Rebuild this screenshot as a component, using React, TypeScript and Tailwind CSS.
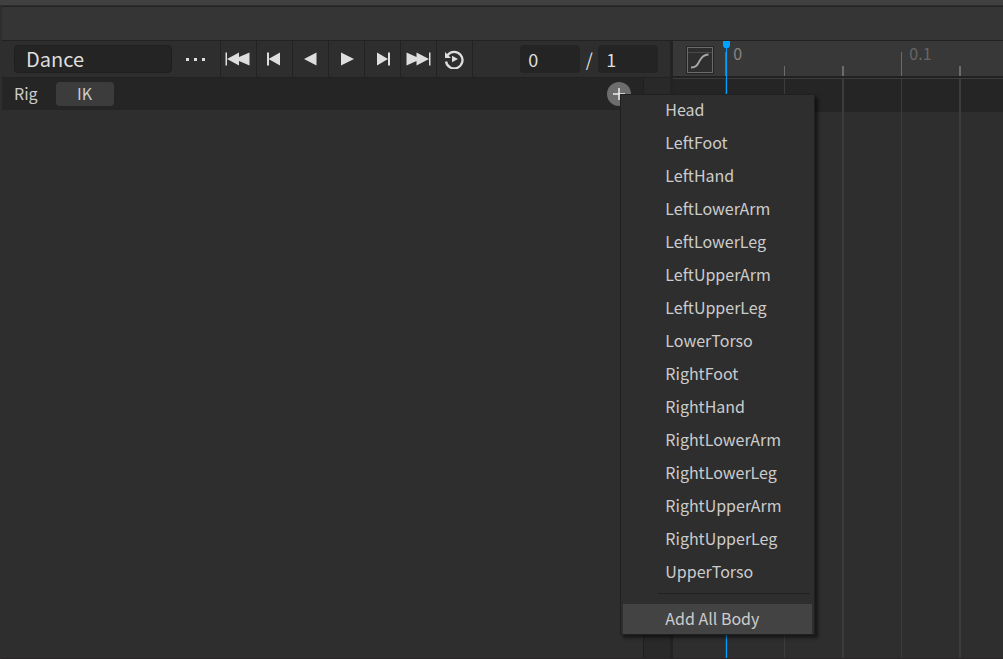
import { useState } from "react";
import type { ReactNode } from "react";

const LIMBS = [
  "Head",
  "LeftFoot",
  "LeftHand",
  "LeftLowerArm",
  "LeftLowerLeg",
  "LeftUpperArm",
  "LeftUpperLeg",
  "LowerTorso",
  "RightFoot",
  "RightHand",
  "RightLowerArm",
  "RightLowerLeg",
  "RightUpperArm",
  "RightUpperLeg",
  "UpperTorso",
];

const TICK_ORIGIN = 52;
const TICK_SPACING = 58.5;
const TICKS = [
  { label: "0", tall: true, wide: false },
  { label: "", tall: false, wide: false },
  { label: "", tall: false, wide: true },
  { label: "0.1", tall: true, wide: false },
  { label: "", tall: false, wide: true },
];

const tickLeft = (index: number) => Math.round(TICK_ORIGIN + index * TICK_SPACING);

function TransportButton({ label, children }: { label: string; children: ReactNode }) {
  return (
    <button
      type="button"
      aria-label={label}
      className="flex w-9 shrink-0 items-center justify-center border-l border-[#222222] hover:bg-[#383838]"
    >
      <svg width="28" height="20" viewBox="1 0 28 20" fill="#dedede" aria-hidden="true">
        {children}
      </svg>
    </button>
  );
}

function Toolbar() {
  const [name, setName] = useState("Dance");
  const [current, setCurrent] = useState("0");
  const [total, setTotal] = useState("1");
  return (
    <div className="flex h-9 items-stretch bg-[#2e2e2e]">
      <div className="flex items-center pl-3">
        <input
          aria-label="Animation name"
          value={name}
          onChange={(e) => setName(e.target.value)}
          className="h-7 w-[158px] rounded border border-[#1f1f1f] bg-[#242424] px-[11px] pb-0.5 text-[20px] leading-6 text-[#dedede] outline-none"
        />
      </div>
      <button type="button" aria-label="More options" className="flex w-12 items-center justify-center">
        <svg width="20" height="4" viewBox="0 0 20 4" fill="#dedede" aria-hidden="true">
          <rect x="0" y="1" width="3" height="3" />
          <rect x="8" y="1" width="3" height="3" />
          <rect x="16" y="1" width="3" height="3" />
        </svg>
      </button>
      <TransportButton label="Go to first frame">
        <path d="M1.500 3.500h1.500v13H1.500zM3 10l12-6.500v4.400L25.500 3.500v13L15 12v4.500z" />
      </TransportButton>
      <TransportButton label="Previous frame">
        <path d="M7 3.500h2v13H7zM8.500 10l11.500-6.500v13z" />
      </TransportButton>
      <TransportButton label="Play backwards">
        <path d="M8 10l12.500-6.500v13z" />
      </TransportButton>
      <TransportButton label="Play">
        <path d="M22 10L9 3.500v13z" />
      </TransportButton>
      <TransportButton label="Next frame">
        <path d="M22 3.500h-2v13h2zM20 10L9 3.500v13z" />
      </TransportButton>
      <TransportButton label="Go to last frame">
        <path d="M26.500 3.500H25v13h1.500zM25 10L12.500 3.500v4.400L2.500 3.500v13l10-4.400v4.400z" />
      </TransportButton>
      <TransportButton label="Toggle looping">
        <path
          d="M7.500 6.200A8.300 8.300 0 1 1 6 12.500"
          fill="none"
          stroke="#dedede"
          strokeWidth="2.300"
        />
        <path d="M5 3v6h6zM12 6.800v6.400l6-3.200z" />
      </TransportButton>
      <div className="flex flex-1 items-center justify-end border-l border-[#222222] pr-3 text-[18px] text-[#dedede]">
        <input
          aria-label="Current frame"
          value={current}
          onChange={(e) => setCurrent(e.target.value)}
          className="h-7 w-[60px] rounded bg-[#242424] px-2 leading-6 outline-none"
        />
        <span className="w-[18px] text-center leading-6">/</span>
        <input
          aria-label="Total frames"
          value={total}
          onChange={(e) => setTotal(e.target.value)}
          className="h-7 w-[60px] rounded bg-[#242424] px-2 leading-6 outline-none"
        />
      </div>
    </div>
  );
}

function LimbMenu() {
  return (
    <ul
      role="menu"
      className="absolute top-3 left-[13px] z-20 w-[195px] border border-[#202020] bg-[#2e2e2e] px-0.5 text-[16px] leading-7 text-[#cccccc] shadow-[3px_3px_3px_rgba(0,0,0,0.5)]"
    >
      {LIMBS.map((limb) => (
        <li key={limb} role="none" className="pb-[3px]">
          <button
            type="button"
            role="menuitem"
            className="block h-[30px] w-full pb-0.5 pl-[42px] text-left hover:bg-[#434343]"
          >
            {limb}
          </button>
        </li>
      ))}
      <li role="separator" className="mt-[3px] mr-0.5 mb-[10px] ml-[35px] h-px bg-[#202020]" />
      <li role="none">
        <button type="button" role="menuitem" className="block h-[30px] w-full bg-[#434343] pb-0.5 pl-[42px] text-left">
          Add All Body
        </button>
      </li>
    </ul>
  );
}

function RigPanel() {
  const [open, setOpen] = useState(true);
  return (
    <div className="flex flex-1 border-t border-[#222222]">
      <div className="flex-1">
        <div className="flex h-8 items-center bg-[#252525] pr-3 pl-3 text-[16px] leading-[22px] text-[#cccccc]">
          <span className="pb-0.5">Rig</span>
          <button type="button" className="ml-[18px] h-6 w-[58px] rounded bg-[#3c3c3c] pb-0.5">
            IK
          </button>
          <div className="relative ml-auto size-6">
            <button
              type="button"
              aria-label="Add limb"
              aria-expanded={open}
              onClick={() => setOpen(!open)}
              className="flex size-6 items-center justify-center rounded-full bg-[#6d6d6d]"
            >
              <svg width="14" height="14" viewBox="0 0 14 14" aria-hidden="true">
                <path d="M7 1v12M1 7h12" stroke="#f0f0f0" strokeWidth="1.500" />
              </svg>
            </button>
            {open && <LimbMenu />}
          </div>
        </div>
      </div>
      <div className="w-[27px] border-l border-[#1f1f1f] bg-[#292929]" />
    </div>
  );
}

function Timeline() {
  return (
    <div className="relative flex flex-1 flex-col overflow-hidden">
      <div className="flex h-9 items-center border-b border-[#222222] bg-[#383838] pt-0.5 pl-[13px]">
        <button
          type="button"
          aria-label="Open curve editor"
          className="flex size-7 items-center justify-center bg-[#252525]"
        >
          <svg width="26" height="26" viewBox="0 0 26 26" fill="none" aria-hidden="true">
            <rect x="0.500" y="0.500" width="25" height="25" fill="#2e2e2e" stroke="#6b6b6b" />
            <path d="M1 5.500h24" stroke="#4a4a4a" />
            <path d="M4 20.500c5 0 6.500-2.500 8.500-6.500s4-6.500 9-6.500" stroke="#a8a8a8" strokeWidth="1.800" />
          </svg>
        </button>
      </div>
      <div className="h-0.5 border-b border-[#3c3c3c] bg-[#222222]" />
      <div className="h-[33px] bg-[#252525]" />
      <div className="flex-1 bg-[#2e2e2e]" />
      {TICKS.map((tick, i) => (
        <div
          key={i}
          style={{ left: tickLeft(i) }}
          className={`absolute inset-y-0 flex flex-col ${tick.wide ? "w-0.5" : "w-px"}`}
        >
          <div className={tick.tall ? "mt-[11px] h-6 bg-[#6b6b6b]" : "mt-[25px] h-[10px] bg-[#6b6b6b]"} />
          <div className="mt-[3px] flex-1 bg-[#3c3c3c]" />
          {tick.label && (
            <span
              className={`absolute top-0 left-2 text-[16px] leading-6 ${i === 0 ? "text-[#858585]" : "text-[#666666]"}`}
            >
              {tick.label}
            </span>
          )}
        </div>
      ))}
      <div className="absolute inset-y-0 left-[50px] w-[7px]">
        <svg width="7" height="7" viewBox="0 0 7 7" className="block" aria-hidden="true">
          <path d="M0 0h7v5L5.500 7h-4L0 5z" fill="#00a2ff" />
        </svg>
        <div className="mx-auto h-full w-px bg-[#00a2ff]" />
      </div>
    </div>
  );
}

export default function App() {
  return (
    <div className="flex min-h-screen flex-col bg-[#2e2e2e] font-['Noto_Sans_CJK_SC',sans-serif]">
      <div className="h-[5px] bg-[#404040]" />
      <div className="mt-px ml-0.5 h-[35px] border-y border-[#222222] bg-[#353535]" />
      <main className="ml-0.5 flex flex-1 border-b border-[#292627]">
        <section className="relative z-10 flex w-[calc(100%*2/3+1px)] shrink-0 flex-col" aria-label="Animation editor">
          <Toolbar />
          <RigPanel />
        </section>
        <div className="w-[3px] shrink-0 bg-[#232323]" />
        <Timeline />
      </main>
    </div>
  );
}
